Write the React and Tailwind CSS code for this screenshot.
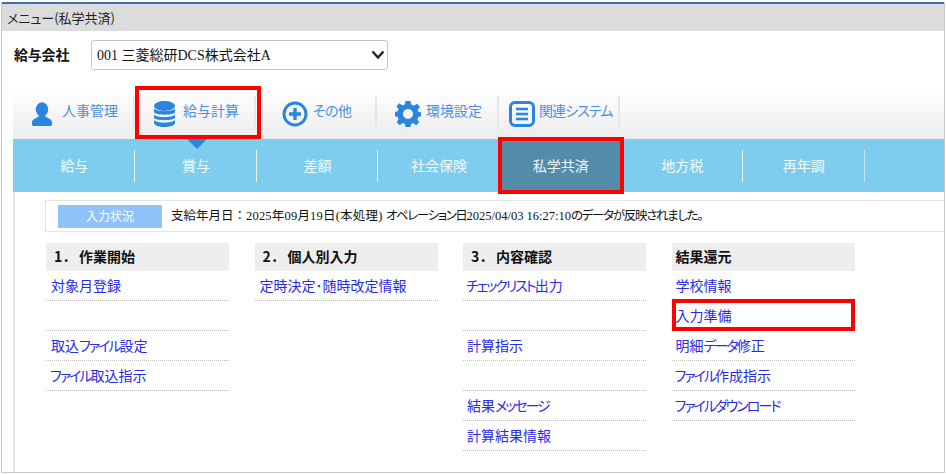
const jp = '"Noto Sans CJK JP", sans-serif';
const mixed = '"Liberation Serif", "Noto Sans CJK JP", serif';

const Person = () => (
  <svg width="20" height="24" viewBox="0 0 20 24" fill="#2a85de">
    <ellipse cx="10" cy="7.5" rx="6.2" ry="7.2" />
    <path d="M6.5 14 L13.5 14 C14 16 19.5 16.5 20 20 L20 22.5 Q20 24 18 24 L2 24 Q0 24 0 22.5 L0 20 C.5 16.5 6 16 6.5 14Z" />
  </svg>
);
const Database = () => (
  <svg width="21" height="26" viewBox="0 0 21 26" fill="#2a85de">
    <ellipse cx="10.5" cy="5" rx="10.5" ry="5" />
    <path d="M0 7.5 C2 11 19 11 21 7.5 L21 11 C21 14.5 0 14.5 0 11Z" />
    <path d="M0 13.5 C2 17 19 17 21 13.5 L21 16.5 C21 20 0 20 0 16.5Z" />
    <path d="M0 19 C2 22.5 19 22.5 21 19 L21 21.5 C21 27.5 0 27.5 0 21.5Z" />
  </svg>
);
const Plus = () => (
  <svg width="26" height="26" viewBox="0 0 26 26" fill="none" stroke="#2a85de">
    <circle cx="13" cy="13" r="11" strokeWidth="3" />
    <path d="M13 7 V19 M7 13 H19" strokeWidth="3.4" />
  </svg>
);
const Gear = () => (
  <svg width="26" height="26" viewBox="0 0 26 26" fill="#2a85de">
    <path fillRule="evenodd" d="M10.5 0 H15.5 L16.2 3.6 L19 4.8 L22 2.7 L25 6 L22.6 9 L23.4 11 L26 11.2 V15.2 L23.3 15.9 L22.4 18.2 L24.2 21.3 L21.1 24.2 L18.2 22 L16 23 L15.5 26 H10.5 L9.9 23 L7.5 22 L4.7 24.2 L1.6 21.1 L3.6 18.3 L2.7 16 L0 15.2 V11 L2.7 10.3 L3.6 8 L1.4 5.2 L4.4 2.3 L7.4 4.4 L9.8 3.4Z M13 8 A5 5 0 1 0 13 18 A5 5 0 1 0 13 8Z" />
  </svg>
);
const ListBox = () => (
  <svg width="26" height="26" viewBox="0 0 26 26" fill="none">
    <rect x="1.5" y="1.5" width="23" height="23" rx="4.5" stroke="#2a85de" strokeWidth="3" />
    <path d="M7 8 H19 M7 13 H19 M7 18 H19" stroke="#2a85de" strokeWidth="2.6" />
  </svg>
);

// Katakana runs are set tighter, as in the reference's proportional gothic.
const Tight = ({ text }) =>
  text.split(/([ァ-ヶー]+)/).map((part, i) =>
    i % 2 ? (
      <span key={i} className="tracking-[-2px]">{part}</span>
    ) : (
      part
    )
  );

const topNav = [
  { label: '人事管理', icon: <Person />, w: 'w-[122px]', pl: 'pl-[19px]', gap: 'gap-[10px]' },
  { label: '給与計算', icon: <Database />, w: 'w-[121px]', pl: 'pl-[19px]', gap: 'gap-[8px]' },
  { label: 'その他', icon: <Plus />, w: 'w-[121px]', pl: 'pl-[26px]', gap: 'gap-[5px]', track: 'tracking-[-0.6px]' },
  { label: '環境設定', icon: <Gear />, w: 'w-[122px]', pl: 'pl-[18px]', gap: 'gap-[5px]' },
  { label: '関連システム', icon: <ListBox />, w: 'w-[121px]', pl: 'pl-[10px]', gap: 'gap-[4px]', track: 'tracking-[-0.9px]' },
];

const tabs = ['給与', '賞与', '差額', '社会保険', '私学共済', '地方税', '再年調'];

const columns = [
  { num: '1．', head: '作業開始', pl: 'pl-[5px]', hpl: 'pl-[5px]', items: ['対象月登録', '', '取込ファイル設定', 'ファイル取込指示'] },
  { num: '2．', head: '個人別入力', pl: 'pl-[5px]', hpl: 'pl-[5px]', items: ['定時決定･随時改定情報'] },
  { num: '3．', head: '内容確認', pl: 'pl-[4px]', hpl: 'pl-[5px]', items: ['チェックリスト出力', '', '計算指示', '', '結果メッセージ', '計算結果情報'] },
  { head: '結果還元', pl: 'pl-[4px]', hpl: 'pl-[4px]', items: ['学校情報', '入力準備', '明細データ修正', 'ファイル作成指示', 'ファイルダウンロード'] },
];

export default function App() {
  return (
    <div className="relative w-[946px] h-[474px] bg-white overflow-hidden [font-feature-settings:'palt']" style={{ fontFamily: jp }}>
      <div className="mx-px mt-[2px] h-[471px] border-x border-b border-[#c8c8c8] flex flex-col">
        <div className="h-[2px] bg-[#3f73ad] shrink-0" />
        <div className="h-[27px] bg-[#dcdcdc] shrink-0 flex items-center pl-[5px] text-[13px] text-[#222]">
          メニュー(私学共済)
        </div>

        <div className="h-[57px] shrink-0 flex items-start pt-[9px] pl-[12px]">
          <span className="text-[14px] font-bold text-[#111] leading-[28px] w-[77px] tracking-[-0.2px]">給与会社</span>
          <div className="relative w-[297px] h-[30px]">
            <select
              defaultValue="a"
              className="appearance-none w-full h-full bg-white border border-[#c4c4c4] rounded-[3px] pl-[5px] text-[14px] text-[#111] [font-feature-settings:'palt']"
              style={{ fontFamily: mixed }}
            >
              <option value="a">001 三菱総研DCS株式会社A</option>
            </select>
            <svg className="absolute right-[3px] top-[10px] pointer-events-none" width="14" height="10" viewBox="0 0 14 10" fill="none">
              <path d="M1.5 1.5 L7 7.5 L12.5 1.5" stroke="#222" strokeWidth="2.4" />
            </svg>
          </div>
        </div>

        <div className="ml-[11px] flex-1 flex flex-col min-h-0">
          <div className="h-[51px] shrink-0 flex bg-gradient-to-b from-white to-[#ececec]">
            {topNav.map((n) => (
              <div key={n.label} className={`${n.w} ${n.pl} ${n.gap} h-[33px] mt-[8px] flex items-center border-r-2 border-[#e6e6e6] text-[14px] text-[#4a90e2] whitespace-nowrap`}>
                <span className="shrink-0 flex mt-[3px]">{n.icon}</span>
                <span className={`-mt-[5px] ${n.track || ''}`}>{n.label}</span>
              </div>
            ))}
          </div>

          <div className="relative h-[53px] shrink-0 bg-[#7fcdee] flex pl-[0.5px]">
            <div className="absolute left-[174px] top-0 w-0 h-0 border-x-[10px] border-x-transparent border-t-[10px] border-t-[#2a85de]" />
            {tabs.map((t, i) => (
              <div key={t} className={`w-[121.6px] h-full flex items-center justify-center relative ${i === 4 ? 'bg-[#538ca8]' : ''}`}>
                <span className="text-[14px] text-white/90 pb-[1px]">{t}</span>
                {i !== 3 && i !== 4 && (
                  <span className={`absolute right-0 top-[11px] h-[32px] w-px ${i === 6 ? 'bg-[#c2e6f5] w-[2px]' : 'bg-white/80'}`} />
                )}
              </div>
            ))}
          </div>

          <div className="flex-1 border-l-[2px] border-[#e6e6e6] pl-[31px] min-h-0">
            <div className="-ml-px mt-[8px] h-[32px] border-y border-l border-[#e4e4e4] flex items-center pl-[12px]">
              <div className="w-[104px] h-[23px] bg-[#90c3f7] text-white text-[12px] flex items-center justify-center">入力状況</div>
              <div className="ml-[9px] text-[12.5px] text-[#111] whitespace-nowrap" style={{ fontFamily: mixed }}>
                <span className="[font-feature-settings:normal]">支給年月日：</span>
                <span className="tracking-[0.2px]">2025年09月19日(本処理) </span>
                <span className="tracking-[-1.4px]">オペレーション日</span>
                <span>2025/04/03 16:27:10</span>
                <span className="tracking-[-1.3px]">のデータが反映されました。</span>
              </div>
            </div>

            <div className="mt-[11px] flex gap-[25.5px]">
              {columns.map((c) => (
                <div key={c.head} className="w-[183px] shrink-0">
                  <div className={`h-[28px] bg-[#eeeeee] flex items-center ${c.hpl} text-[14px] font-bold text-[#111] pb-[1px]`}>
                    {c.num && <span className="w-[28px] pl-[3px] [font-feature-settings:normal]">{c.num}</span>}
                    <span>{c.head}</span>
                  </div>
                  {c.items.map((it, i) => (
                    <div key={i} className={`h-[30px] border-b border-dotted border-[#bdbdbd] ${c.pl} flex items-center text-[14px] text-[#2a2aee] whitespace-nowrap`}>
                      <span className={/^[ァ-ヶ]/.test(it) ? '-ml-px' : ''}><Tight text={it} /></span>
                    </div>
                  ))}
                </div>
              ))}
            </div>
          </div>
        </div>
      </div>

      <div className="absolute left-[135px] top-[86px] w-[126px] h-[53px] border-[4px] border-[#ff0000]" />
      <div className="absolute left-[498px] top-[137px] w-[126px] h-[57px] border-[4px] border-[#ff0000]" />
      <div className="absolute left-[672px] top-[299px] w-[183px] h-[32px] border-[4px] border-[#ff0000]" />
    </div>
  );
}
